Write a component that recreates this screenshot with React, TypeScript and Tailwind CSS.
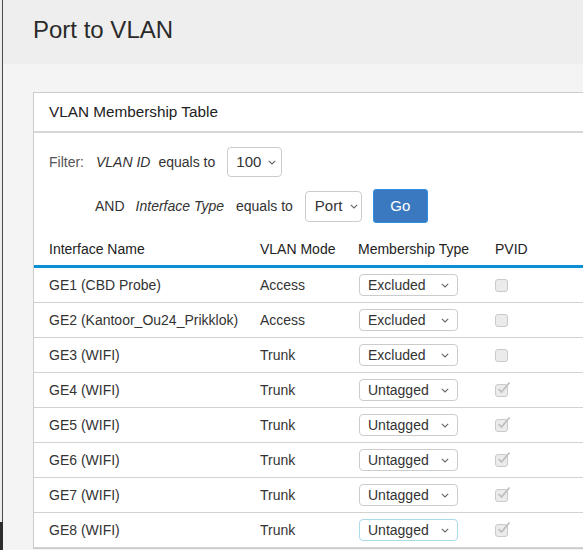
const rows = [
  { name: "GE1 (CBD Probe)", mode: "Access", type: "Excluded", pvid: false },
  { name: "GE2 (Kantoor_Ou24_Prikklok)", mode: "Access", type: "Excluded", pvid: false },
  { name: "GE3 (WIFI)", mode: "Trunk", type: "Excluded", pvid: false },
  { name: "GE4 (WIFI)", mode: "Trunk", type: "Untagged", pvid: true },
  { name: "GE5 (WIFI)", mode: "Trunk", type: "Untagged", pvid: true },
  { name: "GE6 (WIFI)", mode: "Trunk", type: "Untagged", pvid: true },
  { name: "GE7 (WIFI)", mode: "Trunk", type: "Untagged", pvid: true },
  { name: "GE8 (WIFI)", mode: "Trunk", type: "Untagged", pvid: true },
];

function Chevron() {
  return (
    <svg width="8" height="5" viewBox="0 0 8 5" className="shrink-0">
      <polyline points="0.8,0.8 4,4 7.2,0.8" fill="none" stroke="#666" strokeWidth="1.1" />
    </svg>
  );
}

function Checkbox({ checked }: { checked: boolean }) {
  return (
    <div className="relative h-[13px] w-[13px] rounded-[3px] border border-[#cacaca] bg-[#ebebeb]">
      {checked && (
        <svg width="15" height="13" viewBox="0 0 15 13" className="absolute left-[0px] top-[-4px]">
          <polyline points="2.5,8 5.5,11 13.5,1.5" fill="none" stroke="#bdbdbd" strokeWidth="1.6" />
        </svg>
      )}
    </div>
  );
}

export default function App() {
  return (
    <div className="flex h-[550px] w-[583px] overflow-hidden bg-[#f4f4f4] font-['Liberation_Sans',Arial,sans-serif] text-[#333]">
      {/* left window edge */}
      <div className="flex w-[3px] shrink-0 flex-col">
        <div className="flex-1 border-r border-[#4a4a4a] bg-[#ececec]"></div>
        <div className="h-[28px] bg-[#2d2d2d]"></div>
      </div>

      <div className="flex min-w-0 flex-1 flex-col">
        {/* Page title */}
        <div className="h-[64px] shrink-0 bg-[#eeeeee] pl-[30px] pt-[16px]">
          <h1 className="text-[24px] leading-[28px] text-[#2a2a2a]">Port to VLAN</h1>
        </div>

        {/* Card */}
        <div className="ml-[30px] mt-[28px] w-[620px] shrink-0 border border-[#cccccc] bg-white">
          <div className="flex h-[40px] items-center border-b-2 border-[#d6d6d6] px-[15px] text-[15.3px] text-[#222]">
            VLAN Membership Table
          </div>

          {/* Filter */}
          <div className="px-[15px] pt-[14px] text-[14px]">
            <div className="flex h-[30px] items-center">
              <span className="text-[#555]">Filter:</span>
              <span className="ml-[12px] italic">VLAN ID</span>
              <span className="ml-[8px]">equals to</span>
              <div className="ml-[12px] flex h-[30px] w-[55px] items-center gap-[7px] rounded-[4px] border border-[#cccccc] pl-[8px] text-[15px]">
                <span>100</span>
                <Chevron />
              </div>
            </div>
            <div className="mt-[12px] flex h-[34px] items-center pl-[46px]">
              <span>AND</span>
              <span className="ml-[11px] italic">Interface Type</span>
              <span className="ml-[12px]">equals to</span>
              <div className="ml-[12px] flex h-[31px] w-[57px] items-center gap-[8px] rounded-[4px] border border-[#cccccc] pl-[9px] text-[15px]">
                <span>Port</span>
                <Chevron />
              </div>
              <button className="ml-[11px] flex h-[34px] w-[55px] items-center justify-center rounded-[3px] border border-[#2f8fe0] bg-[#3a78c0] text-[15px] text-white">
                Go
              </button>
            </div>
          </div>

          {/* Table */}
          <div className="text-[14px]">
            <div className="grid h-[42px] grid-cols-[211px_98px_137px_1fr] items-end pb-[8px] leading-[16px] text-[#222]">
              <div className="pl-[15px]">Interface Name</div>
              <div className="pl-[15px]">VLAN Mode</div>
              <div className="pl-[15px]">Membership Type</div>
              <div className="pl-[15px]">PVID</div>
            </div>
            <div className="h-[3px] bg-[#0b90d5]"></div>
            {rows.map((r, i) => (
              <div
                key={r.name}
                className="grid h-[35px] grid-cols-[211px_98px_137px_1fr] items-center border-b border-[#d2d2d2]"
              >
                <div className="pl-[15px]">{r.name}</div>
                <div className="pl-[15px]">{r.mode}</div>
                <div className="pl-[16px]">
                  <div
                    className={`flex h-[22px] w-[99px] items-center justify-between rounded-[4px] border pl-[8px] pr-[8px] ${
                      i === rows.length - 1 ? "border-[#a9dbe9]" : "border-[#cccccc]"
                    }`}
                  >
                    <span>{r.type}</span>
                    <Chevron />
                  </div>
                </div>
                <div className="pl-[15px]">
                  <Checkbox checked={r.pvid} />
                </div>
              </div>
            ))}
          </div>
        </div>
      </div>
    </div>
  );
}
